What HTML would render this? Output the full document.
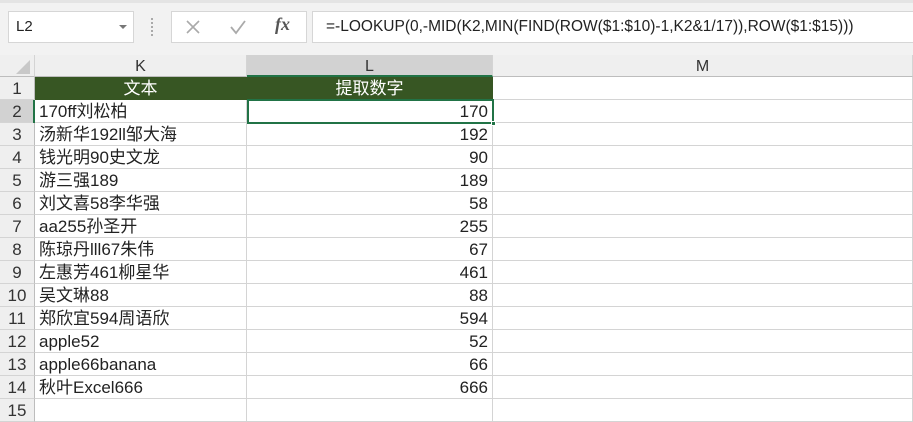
<!DOCTYPE html>
<html><head><meta charset="utf-8"><style>
*{margin:0;padding:0;box-sizing:border-box}
body{width:913px;height:412px;overflow:hidden;background:#fff;font-family:"Liberation Sans","Noto Sans CJK SC",sans-serif;position:relative}
.a{position:absolute}
.top{left:0;top:0;width:913px;height:55px;background:#f2f2f2;border-top:3px solid #e4e4e4}
.box{background:#fff;border:1px solid #d6d6d6;height:32px;top:11px}
.ch{top:55px;height:22px;background:#efefef;border-bottom:1px solid #bdbdbd;border-right:1px solid #d4d4d4;font-size:16px;color:#333;text-align:center;line-height:24px}
.rh{left:0;width:35px;height:23px;background:#efefef;border-bottom:1px solid #d4d4d4;border-right:1px solid #bdbdbd;font-size:17px;color:#333;text-align:center;line-height:23px}
.c{height:23px;border-bottom:1px solid #d4d4d4;border-right:1px solid #d4d4d4;font-size:17px;color:#222;line-height:23px;padding:0 4px;white-space:nowrap}
.r{text-align:right}
</style></head><body>
<div class="a top"></div>
<div class="a box" style="left:8px;width:126px;font-size:15px;line-height:30px;padding-left:7px;color:#222">L2<span class="a" style="left:110px;top:13px;width:0;height:0;border-left:4px solid transparent;border-right:4px solid transparent;border-top:4px solid #777"></span></div>
<div class="a" style="left:151px;top:18px;width:2px;height:18px;border-left:2px dotted #aaa"></div>
<div class="a box" style="left:171px;width:136px"></div>
<svg class="a" style="left:185px;top:19px" width="16" height="16"><path d="M2 2L14 14M14 2L2 14" stroke="#aaa" stroke-width="1.6"/></svg>
<svg class="a" style="left:229px;top:19px" width="18" height="16"><path d="M2 8L7 14L16 2" stroke="#aaa" stroke-width="1.8" fill="none"/></svg>
<div class="a" style="left:275px;top:14px;font-size:18px;color:#555;font-family:'Liberation Serif',serif;font-style:italic;font-weight:bold">fx</div>
<div class="a box" style="left:312px;width:610px;font-size:15.5px;line-height:30px;padding-left:13px;color:#222">=-LOOKUP(0,-MID(K2,MIN(FIND(ROW($1:$10)-1,K2&amp;1/17)),ROW($1:$15)))</div>
<div class="a ch" style="left:0;width:35px;background:#efefef"><span class="a" style="left:16px;top:5px;width:0;height:0;border-left:14px solid transparent;border-bottom:14px solid #c8c8c8"></span></div>
<div class="a ch" style="left:35px;width:212px">K</div>
<div class="a ch" style="left:247px;width:246px;background:#d2d2d2;border-bottom:2px solid #217346">L</div>
<div class="a ch" style="left:493px;width:420px">M</div>
<div id="g"></div>
<script>
var K=["文本","170ff刘松柏","汤新华192ll邹大海","钱光明90史文龙","游三强189","刘文喜58李华强","aa255孙圣开","陈琼丹lll67朱伟","左惠芳461柳星华","吴文琳88","郑欣宜594周语欣","apple52","apple66banana","秋叶Excel666",""];
var L=["提取数字","170","192","90","189","58","255","67","461","88","594","52","66","666",""];
var h="";
for(var i=0;i<15;i++){var t=77+i*23;
h+='<div class="a rh" style="top:'+t+'px;'+(i==1?'background:#d2d2d2;':'')+'">'+(i+1)+'</div>';
if(i==0){h+='<div class="a c" style="left:35px;top:77px;width:212px;background:#375623;color:#fff;text-align:center;border-color:#375623">'+K[0]+'</div><div class="a c" style="left:247px;top:77px;width:246px;background:#375623;color:#fff;text-align:center;border-color:#375623">'+L[0]+'</div>';}
else{h+='<div class="a c" style="left:35px;top:'+t+'px;width:212px">'+K[i]+'</div><div class="a c r" style="left:247px;top:'+t+'px;width:246px">'+L[i]+'</div>';}
h+='<div class="a c" style="left:493px;top:'+t+'px;width:420px"></div>';}
document.getElementById("g").innerHTML=h;
</script>
<div class="a" style="left:247px;top:99px;width:247px;height:25px;border:2px solid #217346"></div>
<div class="a" style="left:491px;top:121px;width:5px;height:5px;background:#217346;border:1px solid #fff"></div>
<div class="a" style="left:33px;top:100px;width:2px;height:23px;background:#217346"></div>
</body></html>
